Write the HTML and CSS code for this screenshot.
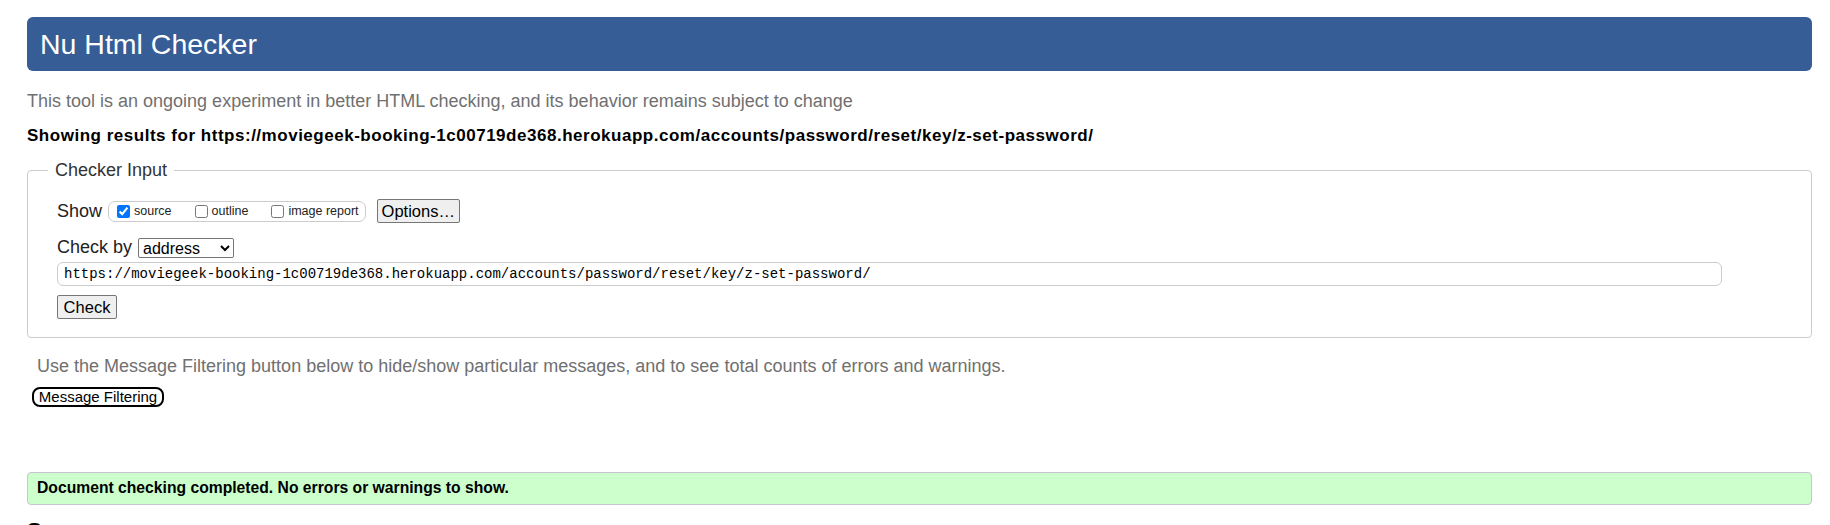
FILE: index.html
```html
<!DOCTYPE html>
<html lang="en">
<head>
<meta charset="utf-8">
<title>Showing results for https://moviegeek-booking-1c00719de368.herokuapp.com/accounts/password/reset/key/z-set-password/ - Nu Html Checker</title>
<link rel="stylesheet" href="styles.css">
</head>
<body>
<h1 class="title">Nu Html Checker</h1>
<p class="about">This tool is an ongoing experiment in better HTML checking, and its behavior remains subject to change</p>
<p class="showing">Showing results for https://moviegeek-booking-1c00719de368.herokuapp.com/accounts/password/reset/key/z-set-password/</p>
<fieldset class="checker">
  <legend class="checker-legend">Checker Input</legend>
  <div class="checker-inner">
    <div class="row show-row">
      <span class="lbl">Show</span>
      <span class="opts">
        <label class="opt"><input class="cb" type="checkbox" checked><span>source</span></label>
        <label class="opt"><input class="cb" type="checkbox"><span>outline</span></label>
        <label class="opt"><input class="cb" type="checkbox"><span>image report</span></label>
      </span>
      <button class="btn options" type="button">Options…</button>
    </div>
    <div class="row by-row">
      <span class="lbl">Check by</span>
      <select class="by-select"><option>address</option></select>
    </div>
    <input class="url" type="url" value="https://moviegeek-booking-1c00719de368.herokuapp.com/accounts/password/reset/key/z-set-password/">
    <button class="btn check" type="button">Check</button>
  </div>
</fieldset>
<p class="filter-note">Use the Message Filtering button below to hide/show particular messages, and to see total counts of errors and warnings.</p>
<button class="filter-btn" type="button">Message Filtering</button>
<div class="success">Document checking completed. No errors or warnings to show.</div>
<h2 class="source">Source</h2>
</body>
</html>
```
FILE: styles.css
```css
html, body {
  margin: 0;
  background: #fff;
}
body {
  padding: 17px 18px 0 27px;
  font-family: "Liberation Sans", Arial, sans-serif;
  color: #000;
}
.title {
  margin: 0;
  height: 54px;
  line-height: 54px;
  padding-left: 13px;
  background: #365d95;
  color: #fff;
  border-radius: 6px;
  font-size: 28.5px;
  font-weight: normal;
}
.about {
  margin: 20px 0 0 0;
  font-size: 18px;
  line-height: 20px;
  color: #707070;
}
.showing {
  margin: 15px 0 0 0;
  font-size: 17px;
  letter-spacing: 0.52px;
  line-height: 19px;
  font-weight: bold;
}
.checker {
  margin: 15px 0 0 0;
  padding: 18px 18px 18px 20px;
  border: 1px solid #ccc;
  border-radius: 4px;
  min-width: 0;
}
.checker-legend {
  padding: 0 7px;
  font-size: 18px;
  line-height: 21px;
  color: #333;
}
.checker-inner {
  margin-left: 9px;
  display: flex;
  flex-direction: column;
  align-items: flex-start;
}
.row {
  display: flex;
  align-items: center;
}
.lbl {
  font-size: 18px;
  line-height: 21px;
  color: #222;
}
.show-row {
  height: 24px;
}
.opts {
  display: flex;
  align-items: center;
  margin-left: 6px;
  height: 19px;
  padding: 0 6px 0 8px;
  border: 1px solid #ccc;
  border-radius: 7px;
}
.opt {
  display: flex;
  align-items: center;
  gap: 4px;
  font-size: 12.5px;
  color: #222;
  margin-left: 23px;
}
.opt:first-child {
  margin-left: 0;
}
.cb {
  margin: 0;
  width: 13px;
  height: 13px;
}
.btn {
  font-family: "Liberation Sans", Arial, sans-serif;
  font-size: 16.5px;
  height: 24px;
  padding: 0 4px;
  background: #efefef;
  color: #000;
  border: 1px solid #767676;
  border-radius: 2px;
}
.options {
  margin-left: 11px;
  width: 83px;
}
.by-row {
  margin-top: 14px;
}
.by-select {
  margin-left: 6px;
  width: 96px;
  height: 20px;
  font-family: "Liberation Sans", Arial, sans-serif;
  font-size: 16px;
  color: #000;
  background: #fff;
  border: 1px solid #767676;
  border-radius: 2px;
}
.url {
  margin-top: 4px;
  align-self: stretch;
  margin-right: 71px;
  height: 24px;
  box-sizing: border-box;
  padding: 0 6px;
  border: 1px solid #ccc;
  border-radius: 6px;
  font-family: "Liberation Mono", "DejaVu Sans Mono", monospace;
  font-size: 14px;
  color: #000;
}
.check {
  margin-top: 9px;
  width: 60px;
}
.filter-note {
  margin: 18px 0 0 10px;
  font-size: 18px;
  line-height: 20px;
  color: #707070;
}
.filter-btn {
  display: block;
  margin: 11px 0 0 5px;
  height: 20px;
  width: 132px;
  padding: 0;
  font-family: "Liberation Sans", Arial, sans-serif;
  font-size: 15px;
  line-height: 16px;
  background: #fff;
  color: #000;
  border: 2px solid #000;
  border-radius: 8px;
}
.success {
  margin-top: 65px;
  padding: 5px 9px 7px;
  line-height: 19px;
  font-size: 15.7px;
  font-weight: bold;
  background: #ccffcc;
  border: 1px solid #c8c4d0;
  border-radius: 4px;
}
.source {
  margin: 13px 0 0 0;
  font-size: 22px;
  line-height: 25px;
  font-weight: bold;
}
```
